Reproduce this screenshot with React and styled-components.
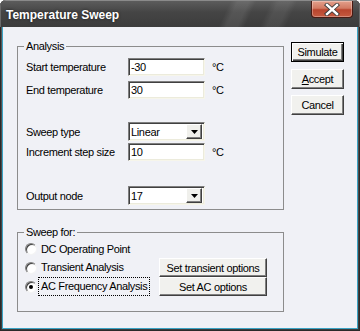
import React from "react";
import styled, { createGlobalStyle } from "styled-components";

const Global = createGlobalStyle`
  html, body { margin: 0; padding: 0; background: #ffffff; }
  body { font-family: "Liberation Sans", Arial, sans-serif; }
  * { box-sizing: border-box; }
`;

const Window = styled.div`
  width: 360px;
  height: 331px;
  display: flex;
  flex-direction: column;
  border-radius: 6px 6px 0 0;
  overflow: hidden;
  background: linear-gradient(180deg, #5a5a5a 0%, #3c3c3c 100%);
  box-shadow: inset 0 0 0 1px #2a2a2a;
`;

const TitleBar = styled.div`
  height: 27px;
  flex: none;
  display: flex;
  align-items: flex-start;
  justify-content: space-between;
  padding: 0 6px 0 6px;
  background:
    linear-gradient(115deg, transparent 0 62%, rgba(255,255,255,0.09) 64% 67%, transparent 69% 73%, rgba(255,255,255,0.07) 75% 78%, transparent 80%),
    linear-gradient(180deg, #5e5e5e 0%, #454545 45%, #3c3c3c 100%);
  box-shadow: inset 0 1px 0 #8a8a8a, inset 1px 0 0 #6a6a6a, inset -1px 0 0 #6a6a6a;
`;

const Title = styled.div`
  margin-top: 8px;
  color: #ffffff;
  font-weight: bold;
  font-size: 12px;
  line-height: 14px;
  text-shadow: 0 0 3px rgba(0,0,0,0.6);
`;

const CloseButton = styled.div`
  margin-top: 1px;
  margin-right: 1px;
  width: 42px;
  height: 17px;
  display: flex;
  align-items: center;
  justify-content: center;
  border: 1px solid #4a1a12;
  border-top: none;
  border-radius: 0 0 4px 4px;
  background: linear-gradient(180deg, #e3a08c 0%, #d27a63 45%, #b9452e 55%, #c65a40 100%);
  box-shadow: inset 0 0 0 1px rgba(255,255,255,0.3);
`;

const Client = styled.div`
  flex: 1;
  margin: 0 2px 2px 2px;
  background: #f0f1f6;
  border: 1px solid #3aa3c4;
  border-top: none;
  display: flex;
  align-items: flex-start;
  font-size: 11px;
  letter-spacing: -0.35px;
  color: #000;
`;

const LeftCol = styled.div`
  width: 267px;
  margin-left: 14px;
  display: flex;
  flex-direction: column;
`;

const Group = styled.fieldset`
  margin: ${p => p.$top}px 0 0 0;
  padding: 0;
  border: 1px solid #8c8c8c;
  min-width: 0;
`;

const Legend = styled.legend`
  margin-left: 6px;
  padding: 0 2px;
  font-size: 11px;
  line-height: 13px;
`;

const GroupBody = styled.div`
  padding: ${p => p.$pt}px 0 ${p => p.$pb}px 8px;
  display: flex;
  flex-direction: column;
`;

const Row = styled.div`
  display: grid;
  grid-template-columns: 95px 77px auto;
  column-gap: 7px;
  align-items: center;
  height: ${p => p.$h}px;
  margin-top: ${p => p.$mt || 0}px;
`;

const Label = styled.span`
  white-space: nowrap;
`;

const Field = styled.div`
  height: 100%;
  background: #ffffff;
  border-style: solid;
  border-width: 1px;
  border-color: #7f7f7f #f6f5ea #f6f5ea #7f7f7f;
  box-shadow: inset 1px 1px 0 #404040, inset -1px -1px 0 #ecebdc;
  display: flex;
  align-items: center;
  padding-left: 2px;
`;

const Combo = styled(Field)`
  justify-content: space-between;
  padding-right: 2px;
`;

const DropButton = styled.div`
  width: 16px;
  height: 15px;
  background: #f0f0ec;
  border-style: solid;
  border-width: 1px;
  border-color: #ffffff #404040 #404040 #ffffff;
  box-shadow: inset -1px -1px 0 #808080;
  display: flex;
  align-items: center;
  justify-content: center;
`;

const Unit = styled.span``;

const SweepGrid = styled.div`
  display: grid;
  grid-template-columns: 133px 108px;
  grid-template-rows: 18px 19px 19px;
`;

const RadioRow = styled.div`
  grid-column: 1;
  grid-row: ${p => p.$row};
  display: flex;
  align-items: center;
  gap: 2px;
  margin-left: -1px;
`;

const Radio = styled.span`
  width: 12px;
  height: 12px;
  border-radius: 50%;
  flex: none;
  border: 1px solid;
  border-color: #808080 #f4f4f4 #f4f4f4 #808080;
  background: radial-gradient(circle at 60% 60%, #ffffff 0 45%, #e2e2e2 100%);
  box-shadow: inset 1px 1px 0 #404040;
  display: flex;
  align-items: center;
  justify-content: center;
  &::after {
    content: "";
    width: 4px;
    height: 4px;
    border-radius: 50%;
    background: ${p => (p.$checked ? "#000" : "transparent")};
  }
`;

const RadioText = styled.span`
  padding: 1px 2px;
  outline: ${p => (p.$focus ? "1px dotted #000" : "none")};
  white-space: nowrap;
  line-height: 15px;
`;

const Btn = styled.div`
  height: ${p => p.$h || 20}px;
  display: flex;
  align-items: center;
  justify-content: center;
  background: #f1f1ee;
  border-style: solid;
  border-width: 1px;
  border-color: #ffffff #404040 #404040 #ffffff;
  box-shadow: inset -1px -1px 0 #808080;
  white-space: nowrap;
`;

const SideBtn = styled(Btn)`
  width: 53px;
  margin-top: ${p => p.$mt}px;
  ${p => p.$default && `
    border-color: #000;
    box-shadow: inset 1px 1px 0 #fff, inset -1px -1px 0 #404040, inset -2px -2px 0 #808080;
  `}
`;

const SweepBtn = styled(Btn)`
  grid-column: 2;
  grid-row: ${p => p.$row};
`;

const RightCol = styled.div`
  margin-left: 7px;
  margin-top: 15px;
  display: flex;
  flex-direction: column;
`;

const Arrow = () => (
  <svg width="7" height="4" viewBox="0 0 7 4">
    <path d="M0 0H7L3.5 4Z" fill="#000" />
  </svg>
);

export default function App() {
  return (
    <>
      <Global />
      <Window>
        <TitleBar>
          <Title>Temperature Sweep</Title>
          <CloseButton>
            <svg width="16" height="13" viewBox="0 0 16 13">
              <path d="M3 2L13 11M13 2L3 11" stroke="#3a3a3a" strokeWidth="4.2" strokeLinecap="square" />
              <path d="M3 2L13 11M13 2L3 11" stroke="#ffffff" strokeWidth="2.4" strokeLinecap="square" />
            </svg>
          </CloseButton>
        </TitleBar>
        <Client>
          <LeftCol>
            <Group $top={13}>
              <Legend>Analysis</Legend>
              <GroupBody $pt={5} $pb={4}>
                <Row $h={18}>
                  <Label>Start temperature</Label>
                  <Field>-30</Field>
                  <Unit>°C</Unit>
                </Row>
                <Row $h={18} $mt={5}>
                  <Label>End temperature</Label>
                  <Field>30</Field>
                  <Unit>°C</Unit>
                </Row>
                <Row $h={19} $mt={23}>
                  <Label>Sweep type</Label>
                  <Combo>
                    Linear
                    <DropButton><Arrow /></DropButton>
                  </Combo>
                  <span />
                </Row>
                <Row $h={18} $mt={2}>
                  <Label>Increment step size</Label>
                  <Field>10</Field>
                  <Unit>°C</Unit>
                </Row>
                <Row $h={19} $mt={25}>
                  <Label>Output node</Label>
                  <Combo>
                    17
                    <DropButton><Arrow /></DropButton>
                  </Combo>
                  <span />
                </Row>
              </GroupBody>
            </Group>
            <Group $top={16}>
              <Legend>Sweep for:</Legend>
              <GroupBody $pt={1} $pb={15}>
                <SweepGrid>
                  <RadioRow $row={1}>
                    <Radio />
                    <RadioText>DC Operating Point</RadioText>
                  </RadioRow>
                  <RadioRow $row={2}>
                    <Radio />
                    <RadioText>Transient Analysis</RadioText>
                  </RadioRow>
                  <SweepBtn $row={2} $h={19}>Set transient options</SweepBtn>
                  <RadioRow $row={3}>
                    <Radio $checked />
                    <RadioText $focus>AC Frequency Analysis</RadioText>
                  </RadioRow>
                  <SweepBtn $row={3} $h={19}>Set AC options</SweepBtn>
                </SweepGrid>
              </GroupBody>
            </Group>
          </LeftCol>
          <RightCol>
            <SideBtn $default $mt={0}>Simulate</SideBtn>
            <SideBtn $mt={7}><span><u>A</u>ccept</span></SideBtn>
            <SideBtn $mt={6}>Cancel</SideBtn>
          </RightCol>
        </Client>
      </Window>
    </>
  );
}
